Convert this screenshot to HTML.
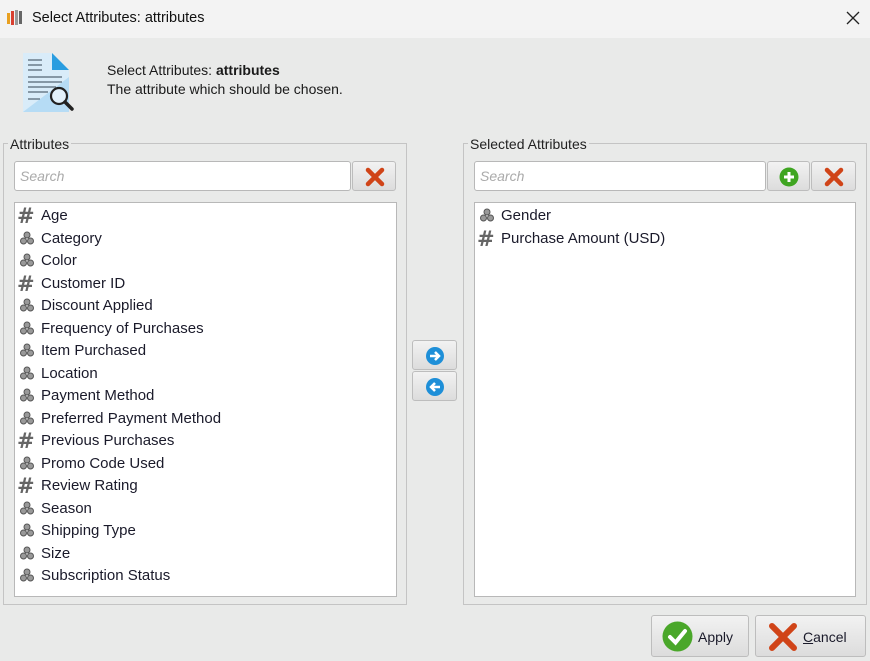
<!DOCTYPE html>
<html><head><meta charset="utf-8"><style>
*{box-sizing:border-box;margin:0;padding:0}
body{width:870px;height:661px;overflow:hidden;background:#e9eae9;font-family:"Liberation Sans",sans-serif;font-size:14px;color:#111;position:relative}
.abs{position:absolute}
.title{left:0;top:0;width:870px;height:38px;background:#f3f3f3}
.fs{border:1px solid #c4c4c4}
.leg{background:#e9eae9;padding:0 2px;font-size:14px;color:#222}
.inp{background:#fff;border:1px solid #b8b8b8;border-radius:3px;color:#aaa;font-style:italic;padding:6px 0 0 5px;font-size:14px}
.btn{background:linear-gradient(#f2f2f2,#dcdcdc);border:1px solid #bdbdbd;border-radius:3px}
.list{background:#fff;border:1px solid #b8b8b8}
.row{position:absolute;left:26px;height:20px;font-size:15px;color:#1a1a2a;white-space:nowrap}
.ic{position:absolute;left:-22px;top:0px;width:18px;height:18px}
.hash{position:absolute;left:-24px;top:-3px;font-weight:bold;font-size:21px;color:#666;font-family:"DejaVu Sans",sans-serif}
</style></head><body>
<div class="abs title"></div>
<svg class="abs" style="left:6px;top:9px" width="18" height="18" viewBox="0 0 18 18"><rect x="1" y="4" width="3" height="11" fill="#e8a020"/><rect x="5" y="2" width="3" height="14" fill="#d84030"/><rect x="9" y="1" width="3" height="15" fill="#999"/><rect x="13" y="2" width="3" height="13" fill="#666"/></svg>
<div class="abs" style="left:32px;top:10px;font-size:14.5px;color:#111">Select Attributes: attributes</div>
<svg class="abs" style="left:846px;top:11px" width="14" height="14" viewBox="0 0 14 14"><path d="M1 1L13 13M13 1L1 13" stroke="#222" stroke-width="1.3"/></svg>

<svg class="abs" style="left:20px;top:52px" width="58" height="62" viewBox="0 0 58 62">
<path d="M3 1H32L49 18V60H3Z" fill="#d9ecf9"/><path d="M3 60L49 25V60Z" fill="#b6dcf5"/>
<path d="M32 1L49 18H32Z" fill="#2a9de0"/>
<g stroke="#6b7d8a" stroke-width="1.5"><path d="M8 8H22M8 13H22M8 18H22M8 25H42M8 30H42M8 35H36M8 40H28M8 47H20"/></g>
<circle cx="39" cy="44" r="8" fill="#fff" fill-opacity=".6" stroke="#222" stroke-width="2.2"/><path d="M45 50L52 57" stroke="#222" stroke-width="3.5" stroke-linecap="round"/></svg>
<div class="abs" style="left:107px;top:62px;font-size:14px;color:#1a1a1a">Select Attributes: <b>attributes</b></div>
<div class="abs" style="left:107px;top:81px;font-size:14px;color:#1a1a1a">The attribute which should be chosen.</div>

<div class="abs fs" style="left:3px;top:143px;width:404px;height:462px"></div>
<div class="abs leg" style="left:8px;top:136px">Attributes</div>
<div class="abs inp" style="left:14px;top:161px;width:337px;height:30px">Search</div>
<div class="abs btn" style="left:352px;top:161px;width:44px;height:30px"><svg style="position:absolute;left:12px;top:5px" width="20" height="20" viewBox="0 0 20 20"><path d="M3 3L17 17M17 3L3 17" stroke="#d04418" stroke-width="4.5" stroke-linecap="round"/></svg></div>
<div class="abs list" style="left:14px;top:202px;width:383px;height:395px"></div>
<div class="abs" style="left:15px;top:207px">
<div class="row" style="top:0"><span class="hash">#</span>Age</div>
<div class="row" style="top:22.5px"><span class="ic">ic</span>Category</div>
<div class="row" style="top:45px"><span class="ic">ic</span>Color</div>
<div class="row" style="top:67.5px"><span class="hash">#</span>Customer ID</div>
<div class="row" style="top:90px"><span class="ic">ic</span>Discount Applied</div>
<div class="row" style="top:112.5px"><span class="ic">ic</span>Frequency of Purchases</div>
<div class="row" style="top:135px"><span class="ic">ic</span>Item Purchased</div>
<div class="row" style="top:157.5px"><span class="ic">ic</span>Location</div>
<div class="row" style="top:180px"><span class="ic">ic</span>Payment Method</div>
<div class="row" style="top:202.5px"><span class="ic">ic</span>Preferred Payment Method</div>
<div class="row" style="top:225px"><span class="hash">#</span>Previous Purchases</div>
<div class="row" style="top:247.5px"><span class="ic">ic</span>Promo Code Used</div>
<div class="row" style="top:270px"><span class="hash">#</span>Review Rating</div>
<div class="row" style="top:292.5px"><span class="ic">ic</span>Season</div>
<div class="row" style="top:315px"><span class="ic">ic</span>Shipping Type</div>
<div class="row" style="top:337.5px"><span class="ic">ic</span>Size</div>
<div class="row" style="top:360px"><span class="ic">ic</span>Subscription Status</div>
</div>

<div class="abs btn" style="left:412px;top:340px;width:45px;height:30px"><svg style="position:absolute;left:12px;top:5px" width="20" height="20" viewBox="0 0 20 20"><circle cx="10" cy="10" r="9" fill="#1e8fd8"/><path d="M5 10H13M10 6L14 10L10 14" stroke="#fff" stroke-width="2.5" fill="none"/></svg></div>
<div class="abs btn" style="left:412px;top:371px;width:45px;height:30px"><svg style="position:absolute;left:12px;top:5px" width="20" height="20" viewBox="0 0 20 20"><circle cx="10" cy="10" r="9" fill="#1e8fd8"/><path d="M15 10H7M10 6L6 10L10 14" stroke="#fff" stroke-width="2.5" fill="none"/></svg></div>

<div class="abs fs" style="left:463px;top:143px;width:404px;height:462px"></div>
<div class="abs leg" style="left:468px;top:136px">Selected Attributes</div>
<div class="abs inp" style="left:474px;top:161px;width:292px;height:30px">Search</div>
<div class="abs btn" style="left:767px;top:161px;width:43px;height:30px"><svg style="position:absolute;left:11px;top:5px" width="20" height="20" viewBox="0 0 20 20"><circle cx="10" cy="10" r="9.5" fill="#3fa521"/><path d="M10 5V15M5 10H15" stroke="#fff" stroke-width="3"/></svg></div>
<div class="abs btn" style="left:811px;top:161px;width:45px;height:30px"><svg style="position:absolute;left:12px;top:5px" width="20" height="20" viewBox="0 0 20 20"><path d="M3 3L17 17M17 3L3 17" stroke="#d04418" stroke-width="4.5" stroke-linecap="round"/></svg></div>
<div class="abs list" style="left:474px;top:202px;width:382px;height:395px"></div>
<div class="abs" style="left:475px;top:207px">
<div class="row" style="top:0"><span class="ic">ic</span>Gender</div>
<div class="row" style="top:22.5px"><span class="hash">#</span>Purchase Amount (USD)</div>
</div>

<div class="abs btn" style="left:651px;top:615px;width:98px;height:42px"><svg style="position:absolute;left:10px;top:5px" width="31" height="31" viewBox="0 0 31 31"><circle cx="15.5" cy="15.5" r="15" fill="#4aa72a"/><path d="M8 16L13.5 21.5L23 10" stroke="#fff" stroke-width="4" fill="none" stroke-linecap="round"/></svg><span style="position:absolute;left:46px;top:13px;font-size:14px;color:#1a1a2a">Apply</span></div>
<div class="abs btn" style="left:755px;top:615px;width:111px;height:42px"><svg style="position:absolute;left:12px;top:6px" width="30" height="30" viewBox="0 0 30 30"><path d="M4 4L26 26M26 4L4 26" stroke="#d04418" stroke-width="6" stroke-linecap="round"/></svg><span style="position:absolute;left:47px;top:13px;font-size:14px;color:#1a1a2a"><u>C</u>ancel</span></div>

<script>
document.querySelectorAll('.ic').forEach(function(e){e.innerHTML='<svg width="16" height="16" viewBox="0 0 16 16"><g fill="#999" stroke="#555" stroke-width="1"><circle cx="8" cy="5" r="3"/><circle cx="4.5" cy="11" r="3"/><circle cx="11.5" cy="11" r="3"/></g></svg>';});
</script>
</body></html>
